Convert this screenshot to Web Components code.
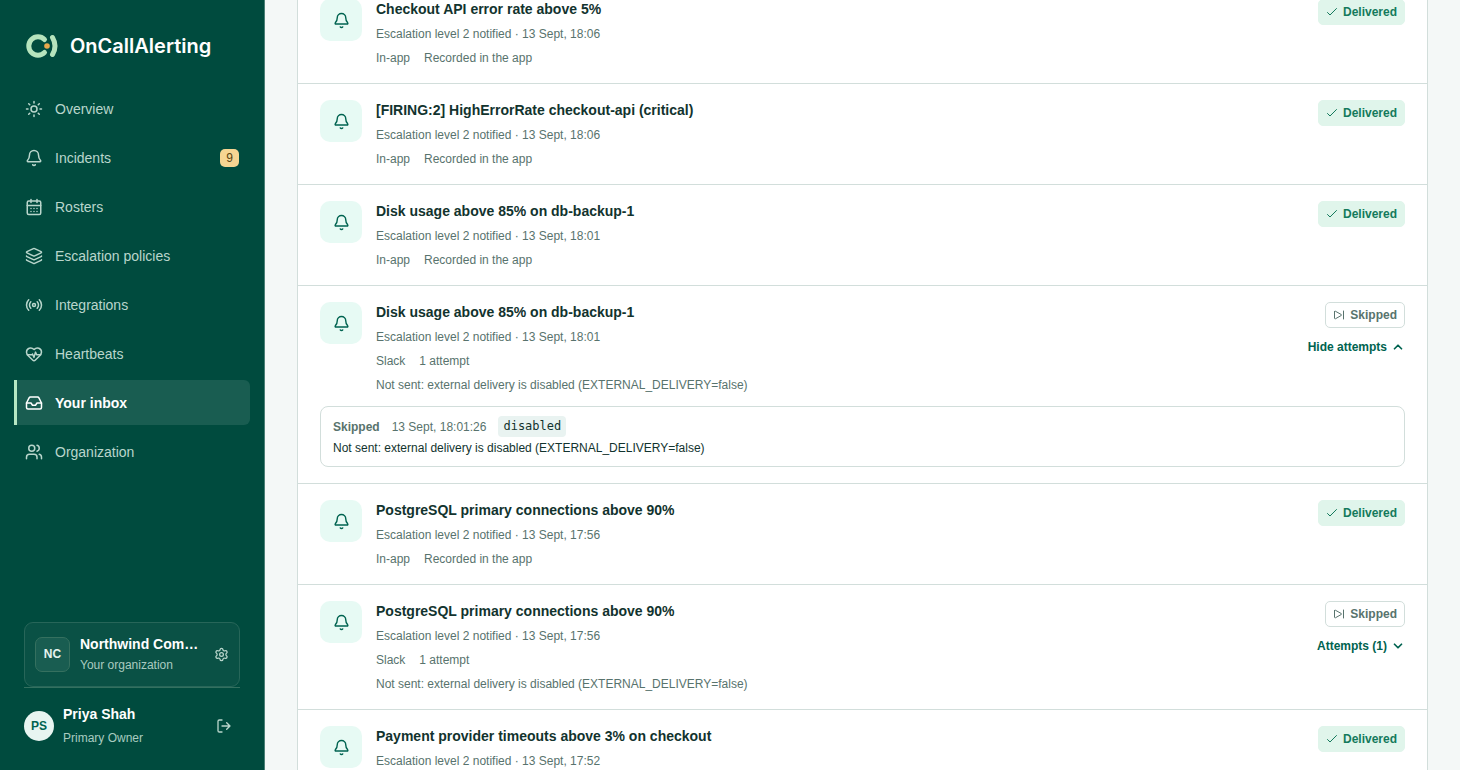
<!DOCTYPE html>
<html lang="en-GB">
<head>
<meta charset="utf-8">
<meta name="viewport" content="width=device-width, initial-scale=1">
<title>Your inbox - OnCallAlerting</title>
<style>
	:root {
		--green-900: #004b3e;
		--green-700: #006350;
		--mint: #b6e8c4;
		--ink: #12332e;
		--muted: #58736d;
		--line: #d2dedb;
		--page: #f4f8f7;
	}

	body {
		margin: 0;
		height: 100vh;
		overflow: hidden;
		background: var(--page);
		color: var(--ink);
		font-family: "Liberation Sans", Arial, sans-serif;
		font-size: 12px;
		line-height: 18px;
	}
</style>
</head>
<body>

<oca-app>
	<oca-sidebar slot="sidebar">
		<oca-nav-item icon="sun">Overview</oca-nav-item>
		<oca-nav-item icon="bell" count="9">Incidents</oca-nav-item>
		<oca-nav-item icon="calendar">Rosters</oca-nav-item>
		<oca-nav-item icon="layers">Escalation policies</oca-nav-item>
		<oca-nav-item icon="radio">Integrations</oca-nav-item>
		<oca-nav-item icon="heart">Heartbeats</oca-nav-item>
		<oca-nav-item icon="inbox" active>Your inbox</oca-nav-item>
		<oca-nav-item icon="users">Organization</oca-nav-item>
		<oca-org slot="footer" initials="NC" name="Northwind Commerce">Your organization</oca-org>
		<oca-profile slot="footer" initials="PS" name="Priya Shah">Primary Owner</oca-profile>
	</oca-sidebar>

	<oca-notification status="delivered" channel="In-app" detail="Recorded in the app" when="13 Sept, 18:06">Checkout API error rate above 5%</oca-notification>
	<oca-notification status="delivered" channel="In-app" detail="Recorded in the app" when="13 Sept, 18:06">[FIRING:2] HighErrorRate checkout-api (critical)</oca-notification>
	<oca-notification status="delivered" channel="In-app" detail="Recorded in the app" when="13 Sept, 18:01">Disk usage above 85% on db-backup-1</oca-notification>
	<oca-notification status="skipped" channel="Slack" detail="1 attempt" when="13 Sept, 18:01" reason="Not sent: external delivery is disabled (EXTERNAL_DELIVERY=false)" attempted="13 Sept, 18:01:26" code="disabled" open>Disk usage above 85% on db-backup-1</oca-notification>
	<oca-notification status="delivered" channel="In-app" detail="Recorded in the app" when="13 Sept, 17:56">PostgreSQL primary connections above 90%</oca-notification>
	<oca-notification status="skipped" channel="Slack" detail="1 attempt" when="13 Sept, 17:56" reason="Not sent: external delivery is disabled (EXTERNAL_DELIVERY=false)" attempted="13 Sept, 17:56:26" code="disabled">PostgreSQL primary connections above 90%</oca-notification>
	<oca-notification status="delivered" channel="In-app" detail="Recorded in the app" when="13 Sept, 17:52">Payment provider timeouts above 3% on checkout</oca-notification>
</oca-app>

<script>
const ICONS = {
	sun: '<circle cx="12" cy="12" r="4"/><path d="M12 2v2M12 20v2M4.93 4.93l1.41 1.41M17.66 17.66l1.41 1.41M2 12h2M20 12h2M6.34 17.66l-1.41 1.41M19.07 4.93l-1.41 1.41"/>',
	bell: '<path d="M10.27 21a2 2 0 0 0 3.46 0"/><path d="M3.26 15.33A1 1 0 0 0 4 17h16a1 1 0 0 0 .74-1.67C19.41 13.96 18 12.5 18 8A6 6 0 0 0 6 8c0 4.5-1.41 5.96-2.74 7.33"/>',
	calendar: '<path d="M8 2v4M16 2v4M3 10h18"/><rect x="3" y="4" width="18" height="18" rx="2"/><path d="M8 14h.01M12 14h.01M16 14h.01M8 18h.01M12 18h.01M16 18h.01"/>',
	layers: '<path d="M12.83 2.18a2 2 0 0 0-1.66 0L2.6 6.08a1 1 0 0 0 0 1.83l8.58 3.91a2 2 0 0 0 1.66 0l8.58-3.9a1 1 0 0 0 0-1.83z"/><path d="M2 12a1 1 0 0 0 .58.91l8.6 3.91a2 2 0 0 0 1.65 0l8.58-3.9A1 1 0 0 0 22 12"/><path d="M2 17a1 1 0 0 0 .58.91l8.6 3.91a2 2 0 0 0 1.65 0l8.58-3.9A1 1 0 0 0 22 17"/>',
	radio: '<path d="M16.25 7.76a6 6 0 0 1 0 8.49M19.08 4.93a10 10 0 0 1 0 14.14M4.93 19.07a10 10 0 0 1 0-14.14M7.75 16.24a6 6 0 0 1 0-8.49"/><circle cx="12" cy="12" r="2"/>',
	heart: '<path d="M2 9.5a5.5 5.5 0 0 1 9.59-3.68.56.56 0 0 0 .82 0A5.49 5.49 0 0 1 22 9.5c0 2.29-1.5 4-3 5.5l-5.49 5.31a2 2 0 0 1-3 .02L5 15c-1.5-1.5-3-3.2-3-5.5"/><path d="M3.22 13H9.5l.5-1 2 4.5 2-7 1.5 3.5h5.27"/>',
	inbox: '<path d="M22 12h-6l-2 3h-4l-2-3H2"/><path d="M5.45 5.11 2 12v6a2 2 0 0 0 2 2h16a2 2 0 0 0 2-2v-6l-3.45-6.89A2 2 0 0 0 16.76 4H7.24a2 2 0 0 0-1.79 1.11z"/>',
	users: '<path d="M16 21v-2a4 4 0 0 0-4-4H6a4 4 0 0 0-4 4v2M16 3.13a4 4 0 0 1 0 7.74M22 21v-2a4 4 0 0 0-3-3.87"/><circle cx="9" cy="7" r="4"/>',
	gear: '<path d="M9.67 4.14a2.34 2.34 0 0 1 4.66 0 2.34 2.34 0 0 0 3.32 1.91 2.34 2.34 0 0 1 2.33 4.03 2.34 2.34 0 0 0 0 3.84 2.34 2.34 0 0 1-2.33 4.03 2.34 2.34 0 0 0-3.32 1.91 2.34 2.34 0 0 1-4.66 0 2.34 2.34 0 0 0-3.32-1.91 2.34 2.34 0 0 1-2.33-4.03 2.34 2.34 0 0 0 0-3.84 2.34 2.34 0 0 1 2.33-4.03 2.34 2.34 0 0 0 3.32-1.91"/><circle cx="12" cy="12" r="3"/>',
	logout: '<path d="m16 17 5-5-5-5M21 12H9M9 21H5a2 2 0 0 1-2-2V5a2 2 0 0 1 2-2h4"/>',
	check: '<path d="m3 13 5 5L21 5"/>',
	skip: '<path d="M3 5.5v13a1.2 1.2 0 0 0 1.9 1l11.6-6.5a1.2 1.2 0 0 0 0-2L4.9 4.5A1.2 1.2 0 0 0 3 5.5zM21 4v16"/>',
	up: '<path d="m18 15-6-6-6 6"/>',
	down: '<path d="m6 9 6 6 6-6"/>'
}

class OcaIcon extends HTMLElement {

	constructor(){
		super()
		this.attachShadow({mode: 'open'})
	}

	static get observedAttributes() {
		return ['name']
	}

	attributeChangedCallback() {
		this.shadowRoot.innerHTML = `
		<style>
			:host{
				display: block;
				flex: none;
				width: 18px;
				height: 18px;
			}
			svg{
				display: block;
				width: 100%;
				height: 100%;
				fill: none;
				stroke: currentColor;
				stroke-width: var(--stroke, 2);
				stroke-linecap: round;
				stroke-linejoin: round;
			}
		</style>
		<svg viewBox="0 0 24 24" aria-hidden="true">${ICONS[this.getAttribute('name')]}</svg>
	`
	}

}

class OcaApp extends HTMLElement {

	constructor(){
		super()
		this.attachShadow({mode: 'open'}).innerHTML = `
		<style>
			:host{
				display: flex;
				height: 100%;
			}
			main{
				flex: 1;
				min-width: 0;
				padding: 0 32px;
				overflow: hidden;
			}
			/* the list is already scrolled a little under the top edge */
			section{
				margin-top: -17px;
				background: #fff;
				border: solid var(--line);
				border-width: 0 1px;
			}
		</style>
		<slot name="sidebar"></slot>
		<main><section aria-label="Notifications"><slot></slot></section></main>
	`
	}

}

class OcaSidebar extends HTMLElement {

	constructor(){
		super()
		this.attachShadow({mode: 'open'}).innerHTML = `
		<style>
			:host{
				display: flex;
				flex: none;
				flex-direction: column;
				box-sizing: border-box;
				width: 265px;
				height: 100%;
				padding: 30px 0 20px;
				background: var(--green-900);
				border-right: 1px solid #4b8076;
				color: #fff;
			}
			.brand{
				display: flex;
				align-items: center;
				gap: 10px;
				margin: 0 24px 24px;
				color: #fff;
				font-family: Inter, "Liberation Sans", sans-serif;
				font-size: 20px;
				font-weight: 600;
				line-height: 32px;
				text-decoration: none;
			}
			.brand svg{
				width: 36px;
				height: 32px;
			}
			nav{
				display: flex;
				flex-direction: column;
				gap: 4px;
				padding: 0 14px;
			}
			footer{
				margin: auto 24px 0;
			}
		</style>
		<a class="brand" href="#">
			<svg viewBox="0 0 36 32" fill="none" stroke-width="5" stroke-linecap="round" aria-hidden="true">
				<path d="M20.5 9.5A9.2 9.2 0 1 0 20.5 22.5" stroke="#b6e4bd"/>
				<path d="M28.500 7.500Q33.500 16 28.500 24.500" stroke="#b6e4bd"/>
				<circle cx="23" cy="16" r="2.800" fill="#e8a94c"/>
			</svg>
			<span>OnCallAlerting</span>
		</a>
		<nav aria-label="Main"><slot></slot></nav>
		<footer><slot name="footer"></slot></footer>
	`
	}

}

class OcaNavItem extends HTMLElement {

	constructor(){
		super()
		this.attachShadow({mode: 'open'})
	}

	connectedCallback() {
		const count = this.getAttribute('count')
		const current = this.hasAttribute('active') ? 'aria-current="page"' : ''

		this.shadowRoot.innerHTML = `
		<style>
			:host{
				display: block;
			}
			a{
				display: flex;
				align-items: center;
				gap: 12px;
				height: 45px;
				padding: 0 11px 0 8px;
				border-left: 3px solid transparent;
				border-radius: 0 6px 6px 0;
				color: #b9d6cc;
				font-size: 14px;
				line-height: 20px;
				text-decoration: none;
			}
			a[aria-current]{
				background: #195d51;
				border-left-color: var(--mint);
				color: #fff;
				font-weight: bold;
			}
			.label{
				flex: 1;
			}
			.count{
				padding: 0 6px;
				border-radius: 5px;
				background: #f6d592;
				color: #5a4210;
				font-size: 12px;
				line-height: 18px;
			}
		</style>
		<a href="#" ${current}>
			<oca-icon name="${this.getAttribute('icon')}"></oca-icon>
			<span class="label"><slot></slot></span>
			${count ? `<span class="count">${count}</span>` : ''}
		</a>
	`
	}

}

class OcaOrg extends HTMLElement {

	constructor(){
		super()
		this.attachShadow({mode: 'open'})
	}

	connectedCallback() {
		this.shadowRoot.innerHTML = `
		<style>
			:host{
				display: block;
			}
			a{
				display: flex;
				align-items: center;
				gap: 10px;
				box-sizing: border-box;
				height: 65px;
				padding: 0 10px;
				background: #0a5145;
				border: 1px solid #276659;
				border-radius: 9px;
				color: #fff;
				text-decoration: none;
			}
			.mark{
				flex: none;
				width: 33px;
				border: 1px solid #35705f;
				border-radius: 7px;
				background: #195d51;
				line-height: 33px;
				font-weight: bold;
				text-align: center;
				color: #e6f4ef;
			}
			.text{
				flex: 1;
				min-width: 0;
			}
			strong, small{
				display: block;
				overflow: hidden;
				white-space: nowrap;
				text-overflow: ellipsis;
			}
			strong{
				font-size: 14px;
				line-height: 20px;
			}
			small{
				font-size: 12px;
				line-height: 22px;
				color: #a9cbc0;
			}
			oca-icon{
				width: 15px;
				height: 15px;
				margin-left: 5px;
				color: #b9d6cc;
			}
		</style>
		<a href="#">
			<span class="mark">${this.getAttribute('initials')}</span>
			<span class="text">
				<strong>${this.getAttribute('name')}</strong>
				<small><slot></slot></small>
			</span>
			<oca-icon name="gear"></oca-icon>
		</a>
	`
	}

}

class OcaProfile extends HTMLElement {

	constructor(){
		super()
		this.attachShadow({mode: 'open'})
	}

	connectedCallback() {
		this.shadowRoot.innerHTML = `
		<style>
			:host{
				display: flex;
				align-items: center;
				gap: 9px;
				padding-top: 14px;
				border-top: 1px solid #33705f;
			}
			.avatar{
				flex: none;
				width: 30px;
				border-radius: 50%;
				background: #e8f5f1;
				color: var(--green-700);
				font-weight: bold;
				line-height: 30px;
				text-align: center;
			}
			.text{
				flex: 1;
			}
			strong, small{
				display: block;
				line-height: 24px;
			}
			strong{
				font-size: 14px;
			}
			small{
				font-size: 12px;
				color: #a9cbc0;
			}
			button{
				padding: 8px;
				border: 0;
				background: none;
				color: #b9d6cc;
			}
			oca-icon{
				width: 16px;
				height: 16px;
			}
		</style>
		<span class="avatar">${this.getAttribute('initials')}</span>
		<span class="text">
			<strong>${this.getAttribute('name')}</strong>
			<small><slot></slot></small>
		</span>
		<button type="button" aria-label="Sign out"><oca-icon name="logout"></oca-icon></button>
	`
	}

}

class OcaStatus extends HTMLElement {

	constructor(){
		super()
		this.attachShadow({mode: 'open'})
	}

	connectedCallback() {
		const icon = this.getAttribute('kind') == 'skipped' ? 'skip' : 'check'

		this.shadowRoot.innerHTML = `
		<style>
			:host{
				display: flex;
				align-items: center;
				gap: 5px;
				padding: 3px 7px;
				border: 1px solid #e0f5eb;
				border-radius: 5px;
				background: #e0f5eb;
				color: #147a5c;
				font-weight: bold;
			}
			:host([kind=skipped]){
				background: #fff;
				border-color: var(--line);
				color: var(--muted);
			}
			oca-icon{
				--stroke: 2;
				width: 12px;
				height: 12px;
			}
		</style>
		<oca-icon name="${icon}"></oca-icon>
		<slot></slot>
	`
	}

}

class OcaNotification extends HTMLElement {

	constructor(){
		super()
		this.attachShadow({mode: 'open'})
	}

	static get observedAttributes() {
		return ['open']
	}

	attributeChangedCallback() {
		if (this.isConnected) this.render()
	}

	connectedCallback() {
		this.render()
	}

	render(){
		const kind = this.getAttribute('status')
		const reason = this.getAttribute('reason')
		const open = this.hasAttribute('open')

		this.shadowRoot.innerHTML = `
		<style>
			:host{
				display: block;
				padding: 16px 22px;
				border-bottom: 1px solid var(--line);
				color: var(--muted);
			}
			.row{
				display: flex;
				align-items: flex-start;
				gap: 14px;
			}
			.tile{
				display: grid;
				place-items: center;
				flex: none;
				width: 42px;
				height: 42px;
				border-radius: 10px;
				background: #e7faf4;
				color: var(--green-700);
			}
			.tile oca-icon{
				width: 17px;
				height: 17px;
			}
			.body{
				display: grid;
				gap: 6px;
				flex: 1;
				min-width: 0;
			}
			h2, p{
				margin: 0;
			}
			h2{
				color: var(--ink);
				font-size: 14px;
				line-height: 20px;
			}
			.meta{
				display: flex;
				gap: 14px;
			}
			.side{
				display: flex;
				flex-direction: column;
				align-items: flex-end;
				gap: 10px;
			}
			button{
				display: flex;
				align-items: center;
				gap: 4px;
				padding: 0;
				border: 0;
				background: none;
				color: var(--green-700);
				font: inherit;
				font-weight: bold;
			}
			button oca-icon{
				--stroke: 3;
				width: 14px;
				height: 14px;
			}
			.attempt{
				margin-top: 12px;
				padding: 9px 12px;
				border: 1px solid var(--line);
				border-radius: 8px;
			}
			.attempt div{
				display: flex;
				align-items: center;
				gap: 12px;
				margin-bottom: 2px;
			}
			.attempt p{
				color: var(--ink);
			}
			code{
				padding: 0 5px;
				border-radius: 4px;
				background: #e9f3f1;
				color: var(--ink);
				font-family: "DejaVu Sans Mono", monospace;
				font-size: 12px;
				line-height: 21px;
			}
		</style>
		<div class="row">
			<span class="tile"><oca-icon name="bell"></oca-icon></span>
			<div class="body">
				<h2><slot></slot></h2>
				<p>Escalation level 2 notified · ${this.getAttribute('when')}</p>
				<p class="meta"><span>${this.getAttribute('channel')}</span><span>${this.getAttribute('detail')}</span></p>
				${reason ? `<p>${reason}</p>` : ''}
			</div>
			<div class="side">
				<oca-status kind="${kind}">${kind == 'skipped' ? 'Skipped' : 'Delivered'}</oca-status>
				${reason ? `<button type="button" aria-expanded="${open}">${open ? 'Hide attempts' : 'Attempts (1)'}<oca-icon name="${open ? 'up' : 'down'}"></oca-icon></button>` : ''}
			</div>
		</div>
		${open ? `
		<div class="attempt">
			<div><strong>Skipped</strong><span>${this.getAttribute('attempted')}</span><code>${this.getAttribute('code')}</code></div>
			<p>${reason}</p>
		</div>` : ''}
	`

		const button = this.shadowRoot.querySelector('button')
		if (button) button.addEventListener('click', () => this.toggleAttribute('open'))
	}

}

customElements.define('oca-icon', OcaIcon)
customElements.define('oca-app', OcaApp)
customElements.define('oca-sidebar', OcaSidebar)
customElements.define('oca-nav-item', OcaNavItem)
customElements.define('oca-org', OcaOrg)
customElements.define('oca-profile', OcaProfile)
customElements.define('oca-status', OcaStatus)
customElements.define('oca-notification', OcaNotification)
</script>
</body>
</html>
